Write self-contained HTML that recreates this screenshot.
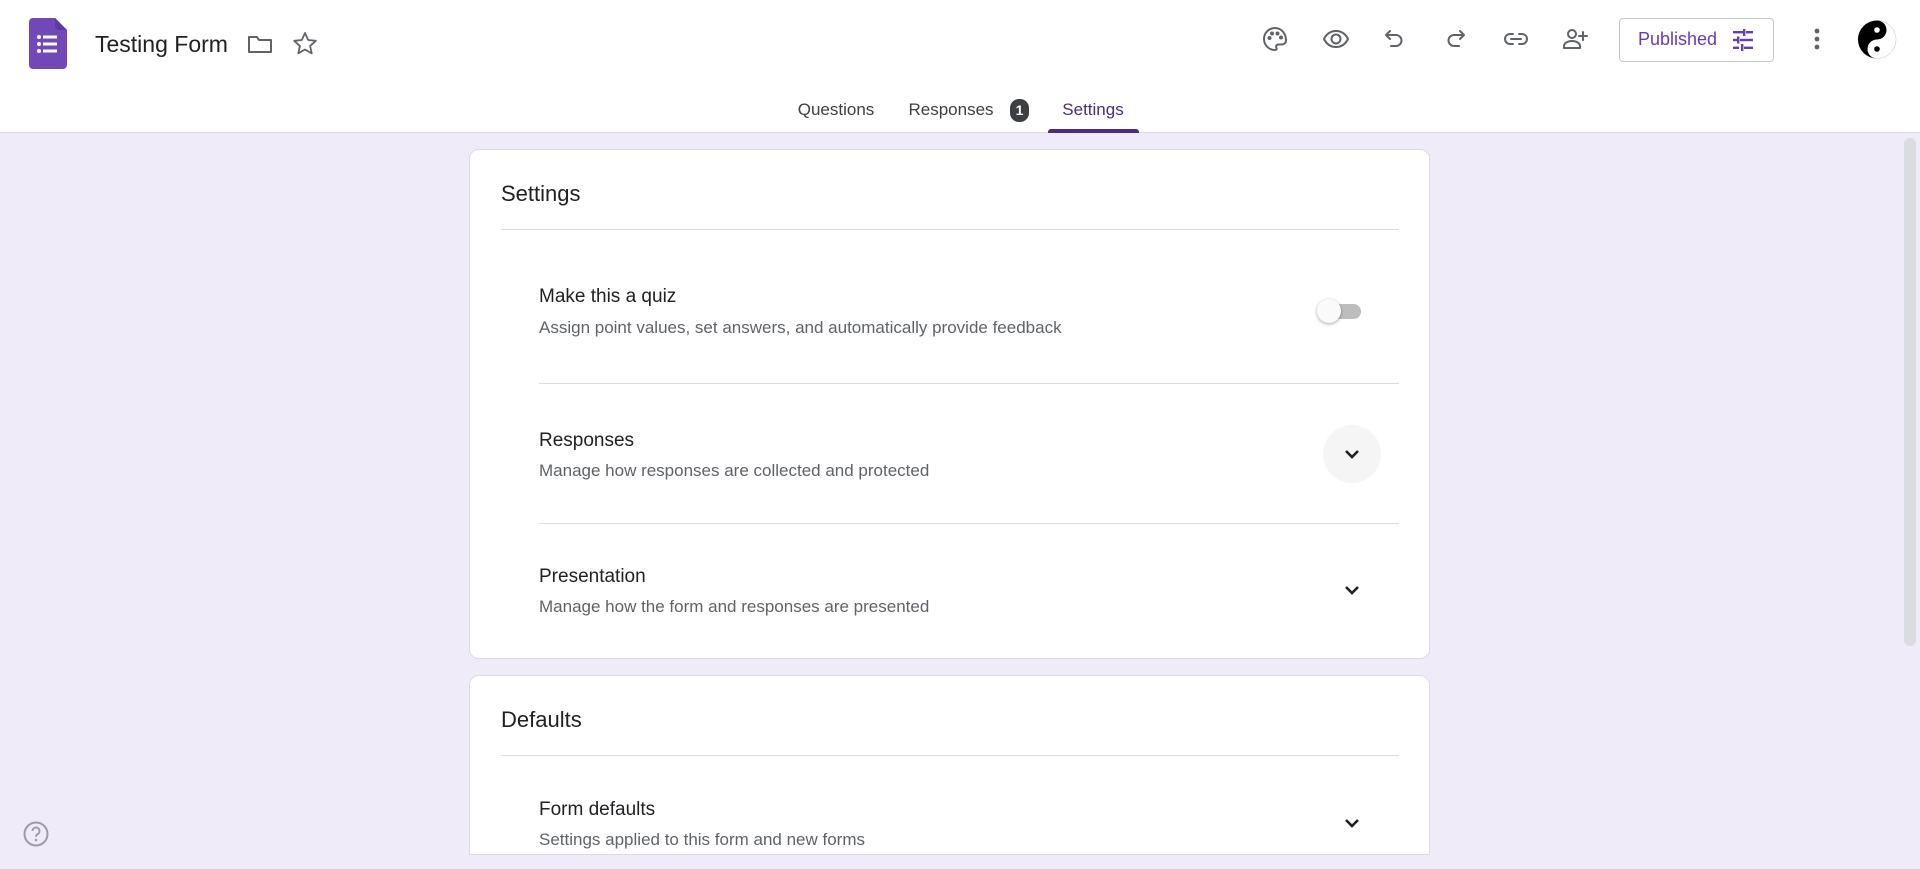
<!DOCTYPE html>
<html><head><meta charset="utf-8"><style>
*{box-sizing:border-box;margin:0;padding:0}
body{width:1920px;height:869px;overflow:hidden;background:#f0ebf8;font-family:"Liberation Sans",Arial,sans-serif;position:relative;color:#202124}
.hdr{position:absolute;left:0;top:0;width:1920px;height:133px;background:#fff;border-bottom:1px solid #dadce0}
.abs{position:absolute}
.ic{position:absolute;width:28px;height:28px;fill:none;stroke:#5f6368;stroke-width:2;stroke-linecap:round;stroke-linejoin:round}
.tab{position:absolute;top:100px;font-size:17px;color:#3c4043;transform:translateX(-50%)}
.card{position:absolute;left:469px;width:961px;background:#fff;border:1px solid #dadce0;border-radius:10px}
.h{position:absolute;left:31px;font-size:22px;color:#202124}
.dv{position:absolute;height:1px;background:#dadce0;right:30px}
.t{position:absolute;left:69px;font-size:19px;color:#202124}
.d{position:absolute;left:69px;font-size:17px;color:#5f6368}
.chev{position:absolute;width:58px;height:58px;border-radius:50%}
.chev svg{position:absolute;left:17px;top:17px}
</style></head><body>
<div class="hdr">
  <svg class="abs" style="left:29px;top:18px" width="38" height="51" viewBox="0 0 38 51">
    <path d="M4 0h22l12 12v35a4 4 0 0 1-4 4H4a4 4 0 0 1-4-4V4a4 4 0 0 1 4-4z" fill="#7248b9"/>
    <path d="M26 0l12 12H30a4 4 0 0 1-4-4z" fill="#5c3a9e"/>
    <g fill="#fff"><circle cx="10" cy="19" r="2"/><circle cx="10" cy="26" r="2"/><circle cx="10" cy="33" r="2"/>
    <rect x="14" y="17.5" width="14" height="3"/><rect x="14" y="24.5" width="14" height="3"/><rect x="14" y="31.5" width="14" height="3"/></g>
  </svg>
  <div class="abs" style="left:95px;top:31px;font-size:23px;color:#202124">Testing Form</div>
  <svg class="ic" style="left:246px;top:30px" viewBox="0 0 28 28"><path d="M3 7h8l2 3h12v12H3z"/></svg>
  <svg class="ic" style="left:291px;top:30px" viewBox="0 0 28 28"><path d="M14 3l3.2 7 7.6.8-5.7 5.1 1.6 7.5L14 19.5l-6.7 3.9 1.6-7.5L3.2 10.8l7.6-.8z" stroke-width="1.8"/></svg>

  <svg class="ic" style="left:1261px;top:25px" viewBox="0 0 28 28"><path d="M14 3a11 11 0 0 0 0 22c1.5 0 2-1 1.5-2-1-1.6 0-3.5 2-3.5H21a4 4 0 0 0 4-4C25 8 20 3 14 3z"/><circle cx="8.5" cy="13" r="1" fill="#5f6368"/><circle cx="11" cy="8.5" r="1" fill="#5f6368"/><circle cx="16.5" cy="8.5" r="1" fill="#5f6368"/><circle cx="20" cy="12.5" r="1" fill="#5f6368"/></svg>
  <svg class="ic" style="left:1322px;top:25px" viewBox="0 0 28 28"><path d="M2 14c3-6 7-8 12-8s9 2 12 8c-3 6-7 8-12 8s-9-2-12-8z"/><circle cx="14" cy="14" r="4.5"/></svg>
  <svg class="ic" style="left:1381px;top:25px" viewBox="0 0 28 28"><path d="M9 6L5 10l4 4M5 10h10a5.5 5.5 0 0 1 0 11h-5"/></svg>
  <svg class="ic" style="left:1441px;top:25px" viewBox="0 0 28 28"><path d="M19 6l4 4-4 4M23 10H13a5.5 5.5 0 0 0 0 11h5"/></svg>
  <svg class="ic" style="left:1502px;top:25px" viewBox="0 0 28 28"><path d="M11 9H8a5 5 0 0 0 0 10h3M17 9h3a5 5 0 0 1 0 10h-3M9 14h10"/></svg>
  <svg class="ic" style="left:1561px;top:25px" viewBox="0 0 28 28"><circle cx="11" cy="9" r="4"/><path d="M3 23v-2c0-3 4-5 8-5s8 2 8 5v2z"/><path d="M22 7v8M18 11h8"/></svg>

  <div class="abs" style="left:1619px;top:18px;width:155px;height:44px;border:1px solid #c4c7c5;border-radius:4px"></div>
  <div class="abs" style="left:1638px;top:29px;font-size:18px;color:#673ab7">Published</div>
  <svg class="abs" style="left:1731px;top:28px" width="24" height="24" viewBox="0 0 24 24" fill="#673ab7"><rect x="2" y="3" width="10" height="2.4"/><rect x="15" y="3" width="7" height="2.4"/><rect x="12" y="1" width="2.4" height="7"/><rect x="2" y="10.8" width="4" height="2.4"/><rect x="9" y="10.8" width="13" height="2.4"/><rect x="6" y="8.5" width="2.4" height="7"/><rect x="2" y="18.6" width="6" height="2.4"/><rect x="13" y="18.6" width="9" height="2.4"/><rect x="10" y="16" width="2.4" height="7"/></svg>
  <svg class="abs" style="left:1810px;top:26px" width="14" height="26" viewBox="0 0 14 26" fill="#5f6368"><circle cx="7" cy="5" r="2.4"/><circle cx="7" cy="13" r="2.4"/><circle cx="7" cy="21" r="2.4"/></svg>
  <svg class="abs" style="left:1857px;top:19px" width="40" height="41" viewBox="-20 -20 40 40"><circle r="19" fill="#fff" stroke="#ccc" stroke-width=".6"/><path d="M0-19A19 19 0 0 0 0 19A9.5 9.5 0 0 1 0 0A9.5 9.5 0 0 0 0-19z" fill="#000"/><circle cy="-9.5" r="2.8" fill="#fff"/><circle cy="9.5" r="2.8" fill="#000"/></svg>

  <div class="tab" style="left:836px">Questions</div>
  <div class="tab" style="left:951px">Responses</div>
  <div class="abs" style="left:1010px;top:99px;width:19px;height:23px;border-radius:9px;background:#3c4043;color:#fff;font-size:14px;text-align:center;line-height:23px;font-weight:bold">1</div>
  <div class="tab" style="left:1093px;color:#4a2c80">Settings</div>
  <div class="abs" style="left:1048px;top:129px;width:91px;height:4px;background:#4a2c80;border-radius:3px 3px 0 0"></div>
</div>

<div class="abs" style="left:1904px;top:138px;width:12px;height:508px;background:#dadce0;border-radius:6px"></div>

<div class="card" style="top:149px;height:510px">
  <div class="h" style="top:31px">Settings</div>
  <div class="dv" style="left:31px;top:79px"></div>
  <div class="t" style="top:136px">Make this a quiz</div>
  <div class="d" style="top:168px">Assign point values, set answers, and automatically provide feedback</div>
  <div class="abs" style="left:851px;top:154px;width:40px;height:15px;border-radius:8px;background:#bdbdbd"></div>
  <div class="abs" style="left:847px;top:149px;width:24px;height:24px;border-radius:50%;background:#fafafa;box-shadow:0 1px 3px rgba(0,0,0,.35)"></div>
  <div class="dv" style="left:69px;top:233px"></div>
  <div class="t" style="top:280px">Responses</div>
  <div class="d" style="top:311px">Manage how responses are collected and protected</div>
  <div class="chev" style="left:853px;top:275px;background:#f5f5f5"><svg width="24" height="24" viewBox="0 0 24 24"><path d="M6 9l6 6 6-6" fill="none" stroke="#202124" stroke-width="2.6"/></svg></div>
  <div class="dv" style="left:69px;top:373px"></div>
  <div class="t" style="top:416px">Presentation</div>
  <div class="d" style="top:447px">Manage how the form and responses are presented</div>
  <div class="chev" style="left:853px;top:411px"><svg width="24" height="24" viewBox="0 0 24 24"><path d="M6 9l6 6 6-6" fill="none" stroke="#202124" stroke-width="2.6"/></svg></div>
</div>

<div class="card" style="top:675px;height:180px;border-radius:10px 10px 0 0">
  <div class="h" style="top:31px">Defaults</div>
  <div class="dv" style="left:31px;top:79px"></div>
  <div class="t" style="top:123px">Form defaults</div>
  <div class="d" style="top:154px">Settings applied to this form and new forms</div>
  <div class="chev" style="left:853px;top:118px"><svg width="24" height="24" viewBox="0 0 24 24"><path d="M6 9l6 6 6-6" fill="none" stroke="#202124" stroke-width="2.6"/></svg></div>
</div>

<svg class="abs" style="left:22px;top:820px" width="28" height="28" viewBox="0 0 28 28"><circle cx="14" cy="14" r="11.5" fill="none" stroke="#9e9aa6" stroke-width="2"/><path d="M10.5 11a3.5 3.5 0 1 1 5 3.2c-1 .6-1.5 1.2-1.5 2.6" fill="none" stroke="#9e9aa6" stroke-width="2"/><circle cx="14" cy="20" r="1.3" fill="#9e9aa6"/></svg>
</body></html>
